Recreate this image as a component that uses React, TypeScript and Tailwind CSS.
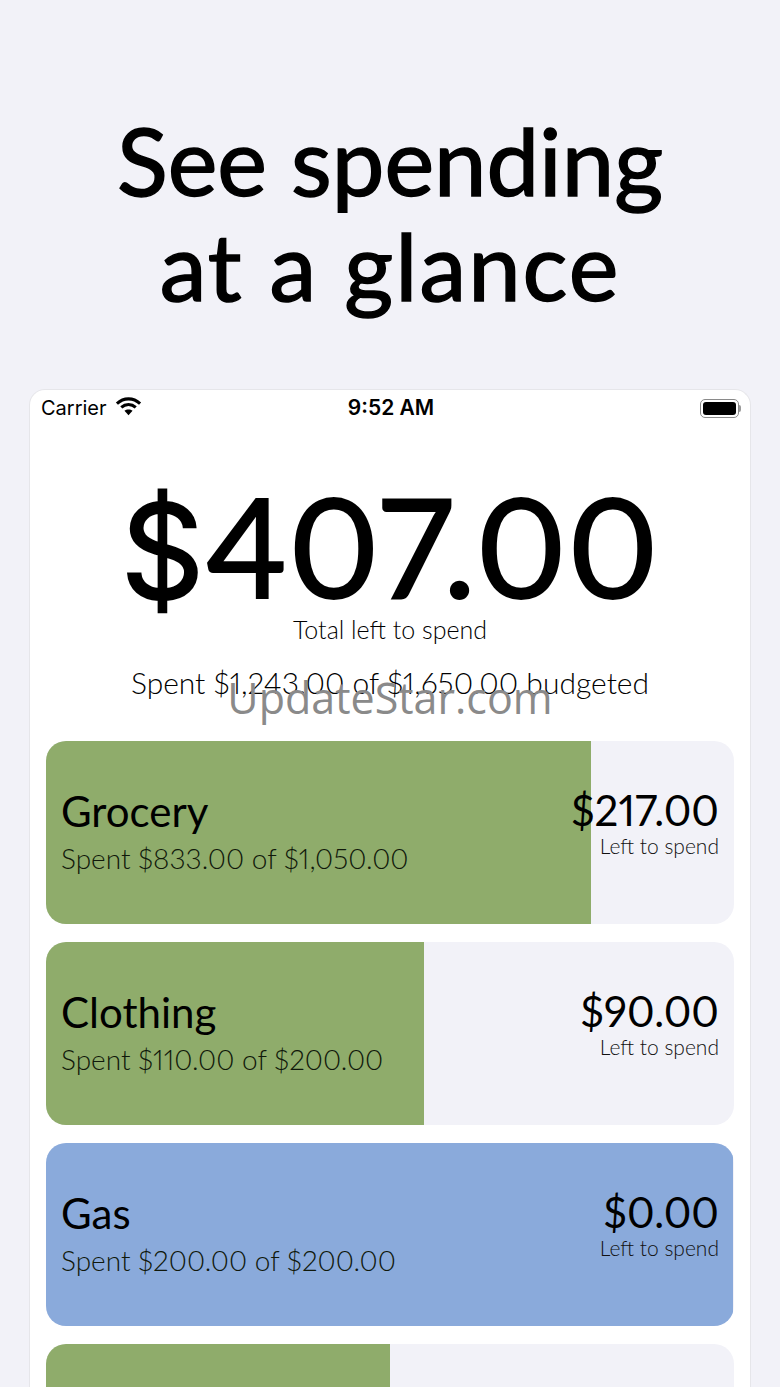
import React from 'react';

interface Category {
  name: string;
  spent: string;
  left: string;
  fill: number;
  color: string;
}

const categories: Category[] = [
  { name: 'Grocery', spent: 'Spent $833.00 of $1,050.00', left: '$217.00', fill: 545, color: 'bg-[#8fac6b]' },
  { name: 'Clothing', spent: 'Spent $110.00 of $200.00', left: '$90.00', fill: 378, color: 'bg-[#8fac6b]' },
  { name: 'Gas', spent: 'Spent $200.00 of $200.00', left: '$0.00', fill: 687, color: 'bg-[#8aaadb]' },
  { name: '', spent: '', left: '', fill: 344, color: 'bg-[#8fac6b]' },
];

const StatusBar = () => (
  <div className="flex items-center h-[36px] pl-[11px] pr-[9px] text-[20px] text-black font-['Inter',sans-serif]">
    <div className="flex-1 flex items-center gap-[8px]">
      <span>Carrier</span>
      <svg width="27" height="20" viewBox="0 0 28 20" fill="none" stroke="black" strokeWidth="3.2" className="-mt-1">
        <path d="M2 7.5C9 1 19 1 26 7.5" />
        <path d="M6.5 11.5C11 7.5 17 7.5 21.5 11.5" />
        <path d="M14 19.5L9.8 15C12 13 16 13 18.2 15Z" fill="black" stroke="none" />
      </svg>
    </div>
    <span className="font-semibold text-[21px]">9:52 AM</span>
    <div className="flex-1 flex justify-end items-center">
      <div className="w-[39px] h-[19px] rounded-[5px] border border-[#8a8a8a] p-[2px]">
        <div className="w-full h-full rounded-[3px] bg-black" />
      </div>
      <div className="w-[2px] h-[7px] rounded-r-sm bg-[#9a9a9a]" />
    </div>
  </div>
);

const CategoryCard = ({ item }: { item: Category }) => (
  <div className="relative h-[183px] shrink-0 rounded-[20px] bg-[#f2f2f8] overflow-hidden">
    <div className={`absolute inset-y-0 left-0 ${item.color}`} style={{ width: item.fill }} />
    {item.name && (
      <div className="relative flex h-full items-center justify-between px-[15px] pb-[3px] text-black">
        <div>
          <div className="text-[42px] leading-[50px]">{item.name}</div>
          <div className="text-[28px] leading-[36px] font-light text-[#10180a] mt-[4px]">{item.spent}</div>
        </div>
        <div className="text-right -mt-[18px]">
          <div className="text-[42px] leading-[48px]">{item.left}</div>
          <div className="text-[21px] leading-[24px] font-light text-[#111111]">Left to spend</div>
        </div>
      </div>
    )}
  </div>
);

export default function App() {
  return (
    <div className="relative h-[1387px] w-[780px] overflow-hidden bg-[#f2f2f8] font-['Lato',sans-serif] text-black proportional-nums">
      <h1 className="pt-[107px] text-center text-[94px] leading-[105px] font-normal h-[389px] [-webkit-text-stroke:1.5px_#000]">
        See spending
        <br />
        <span className="tracking-[2px]">at a glance</span>
      </h1>
      <div className="mx-[29px] h-[998px] rounded-t-[16px] bg-white border-x border-t border-[#e6e6ea]">
        <StatusBar />
        <div className="text-center text-[138px] leading-[118px] mt-[60px] h-[118px] tracking-[1px] [-webkit-text-stroke:2px_#000]">
          <span className="font-['Inter',sans-serif] text-[130px]">$</span>407.00
        </div>
        <div className="text-center text-[25px] leading-[32px] font-light mt-[9px]">Total left to spend</div>
        <div className="text-center text-[30px] leading-[38px] font-light mt-[18px]">Spent $1,243.00 of $1,650.00 budgeted</div>
        <div className="flex flex-col gap-[18px] mx-[16px] mt-[40px]">
          {categories.map((item, i) => (
            <CategoryCard key={i} item={item} />
          ))}
        </div>
      </div>
      <div className="absolute left-0 right-0 top-[670px] text-center text-[43px] leading-[56px] text-[#8a8a8a] font-['Open_Sans',sans-serif]">
        UpdateStar.com
      </div>
    </div>
  );
}
